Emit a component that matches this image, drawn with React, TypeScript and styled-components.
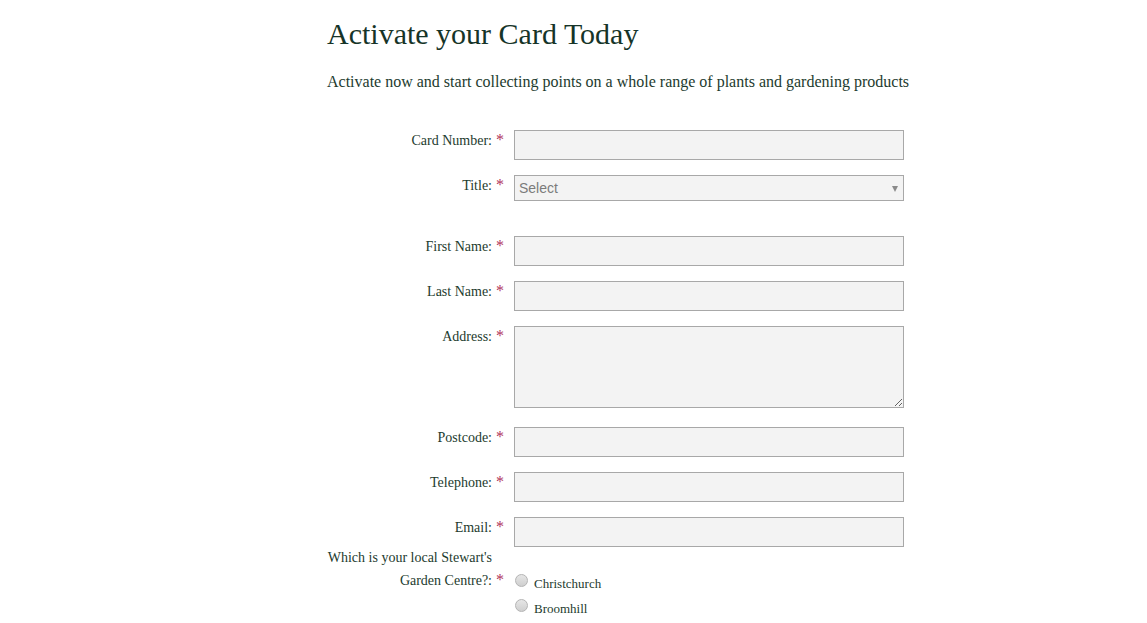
import styled, { createGlobalStyle } from "styled-components";

const GlobalStyle = createGlobalStyle`
    html, body {margin:0; padding:0; background:#fff;}
    body {font-family:"Liberation Serif", "Times New Roman", serif; color:#1d3b2e;}
`;

const Page = styled.main`
    padding: 16px 0 0 327px;
`;

const Heading = styled.h1`
    margin: 0;
    font-size: 30px;
    line-height: 36px;
    font-weight: normal;
    color: #163428;
`;

const Intro = styled.p`
    margin: 19px 0 37px;
    font-size: 16px;
    line-height: 22px;
`;

const Form = styled.form`
    width: 577px;
`;

const Row = styled.div<{ $gap?: number }>`
    display: grid;
    grid-template-columns: 177px 390px;
    column-gap: 10px;
    align-items: start;
    margin-bottom: ${(p) => (p.$gap ?? 15)}px;
`;

const Label = styled.label<{ $lh?: number }>`
    box-sizing: border-box;
    padding-right: 12px;
    text-align: right;
    font-size: 14px;
    line-height: ${(p) => p.$lh ?? 20}px;
    & .req {color:#b1335c; font-size:16px; margin-left:4px; margin-right:-12px;}
`;

const TextInput = styled.input`
    box-sizing: border-box;
    width: 390px;
    height: 30px;
    margin: 0;
    border: 1px solid #a8a8a8;
    background: #f3f3f3;
    font-family: "Liberation Sans", Arial, sans-serif;
    font-size: 14px;
    outline: none;
`;

const TextArea = styled.textarea`
    box-sizing: border-box;
    display: block;
    width: 390px;
    height: 82px;
    margin: 0 0 4px;
    border: 1px solid #a8a8a8;
    background: #f3f3f3;
    font-family: "Liberation Sans", Arial, sans-serif;
    outline: none;
`;

const SelectWrap = styled.span`
    position: relative;
    display: block;
    width: 390px;
    &::after {
        content: "";
        position: absolute;
        right: 6px;
        top: 11px;
        border-left: 3.5px solid transparent;
        border-right: 3.5px solid transparent;
        border-top: 6px solid #8a8a8a;
        pointer-events: none;
    }
`;

const Select = styled.select`
    box-sizing: border-box;
    appearance: none;
    width: 390px;
    height: 26px;
    margin: 0;
    padding: 0 4px;
    border: 1px solid #a8a8a8;
    border-radius: 0;
    background: #f3f3f3;
    color: #7b7b7b;
    font-family: "Liberation Sans", Arial, sans-serif;
    font-size: 14px;
    outline: none;
`;

const Options = styled.div`
    padding-top: 21px;
`;

const Option = styled.label`
    display: flex;
    align-items: center;
    height: 25px;
    font-size: 13px;
    & input {
        appearance: none;
        box-sizing: border-box;
        width: 13px;
        height: 13px;
        margin: 0 6px 0 1px;
        border: 1px solid #b4b4b4;
        border-radius: 50%;
        background: linear-gradient(#e6e6e6, #cfcfcf);
    }
    & span {position: relative; top: 3px;}
`;

function Req() {
    return <span className="req">*</span>;
}

export default function App() {
    const lower = ["First Name", "Last Name"];
    const after = ["Postcode", "Telephone"];

    return (
        <>
            <GlobalStyle />
            <Page>
                <Heading>Activate your Card Today</Heading>
                <Intro>Activate now and start collecting points on a whole range of plants and gardening products</Intro>
                <Form>
                    <Row>
                        <Label>Card Number:<Req /></Label>
                        <TextInput type="text" />
                    </Row>
                    <Row $gap={35}>
                        <Label>Title:<Req /></Label>
                        <SelectWrap>
                            <Select defaultValue="">
                                <option value="">Select</option>
                                <option>Mr</option>
                                <option>Mrs</option>
                                <option>Miss</option>
                                <option>Ms</option>
                            </Select>
                        </SelectWrap>
                    </Row>
                    {lower.map((n) => (
                        <Row key={n}>
                            <Label>{n}:<Req /></Label>
                            <TextInput type="text" />
                        </Row>
                    ))}
                    <Row>
                        <Label>Address:<Req /></Label>
                        <TextArea />
                    </Row>
                    {after.map((n) => (
                        <Row key={n}>
                            <Label>{n}:<Req /></Label>
                            <TextInput type="text" />
                        </Row>
                    ))}
                    <Row $gap={0}>
                        <Label>Email:<Req /></Label>
                        <TextInput type="email" />
                    </Row>
                    <Row $gap={0}>
                        <Label $lh={22}>Which is your local Stewart's Garden Centre?:<Req /></Label>
                        <Options>
                            <Option><input type="radio" name="centre" /><span>Christchurch</span></Option>
                            <Option><input type="radio" name="centre" /><span>Broomhill</span></Option>
                        </Options>
                    </Row>
                </Form>
            </Page>
        </>
    );
}
